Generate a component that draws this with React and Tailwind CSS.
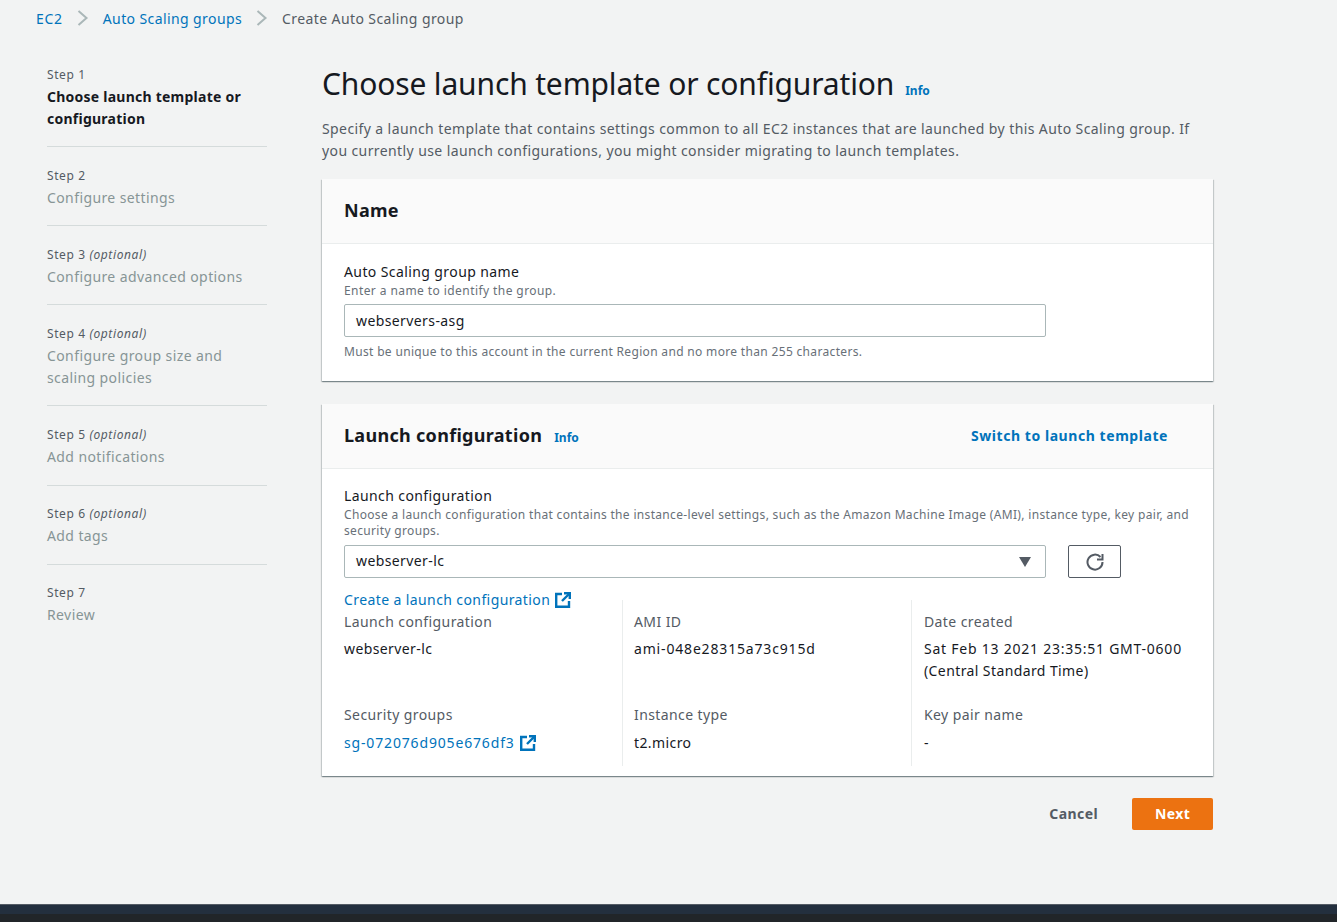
const steps = [
    { step: 'Step 1', title: ['Choose launch template or', 'configuration'], active: true, pad: 'pt-[20px] pb-[16px]' },
    { step: 'Step 2', title: ['Configure settings'], pad: 'pt-[20px] pb-[16px]' },
    { step: 'Step 3', optional: true, title: ['Configure advanced options'], pad: 'pt-[20px] pb-[16px]' },
    { step: 'Step 4', optional: true, title: ['Configure group size and', 'scaling policies'], pad: 'pt-[20px] pb-[16px]' },
    { step: 'Step 5', optional: true, title: ['Add notifications'], pad: 'pt-[20px] pb-[17px]' },
    { step: 'Step 6', optional: true, title: ['Add tags'], pad: 'pt-[19px] pb-[17px]' },
    { step: 'Step 7', title: ['Review'], pad: 'pt-[19px] pb-[16px]' },
];

function Chevron() {
    return (
        <svg width="12" height="16" viewBox="0 0 12 16" fill="none" stroke="#aab7b8" strokeWidth="2" className="shrink-0">
            <path d="M1.5 1l8 7-8 7" />
        </svg>
    );
}

function ExternalIcon() {
    return (
        <svg width="16" height="16" viewBox="0 0 16 16" fill="none" stroke="#0073bb" strokeWidth="2.4" className="shrink-0">
            <path d="M7 2H1.2v12.8H14V9" />
            <path d="M9 1.2h5.8V7" />
            <path d="M14.5 1.5L7 9" />
        </svg>
    );
}

function Detail({ label, value, children, className = '', gap = 'mt-[5px]' }) {
    return (
        <div className={className}>
            <div className="text-[#545b64] leading-[22px]">{label}</div>
            <div className={`${gap} leading-[22px] text-[#16191f]`}>{children || value}</div>
        </div>
    );
}

export default function App() {
    return (
        <div className="min-h-[922px] bg-[#f2f3f3] flex flex-col text-[14px] tracking-[0.4px] text-[#16191f] font-['Noto_Sans',sans-serif]">
            <div className="flex items-center h-[36px] pl-[36px] text-[#0073bb]">
                <span className="tracking-[0.7px]">EC2</span>
                <span className="ml-[14px] mr-[14px]"><Chevron /></span>
                <span>Auto Scaling groups</span>
                <span className="ml-[14px] mr-[14px]"><Chevron /></span>
                <span className="text-[#545b64]">Create Auto Scaling group</span>
            </div>

            <div className="flex flex-1 pl-[47px]">
                <div className="w-[220px] shrink-0 pt-[10px]">
                    {steps.map((s, i) => (
                        <div key={s.step} className={`${s.pad} ${i < steps.length - 1 ? 'border-b border-[#d5dbdb]' : ''}`}>
                            <div className="text-[12px] tracking-[0.6px] leading-[18px] text-[#545b64]">
                                {s.step}{s.optional && <i> (optional)</i>}
                            </div>
                            <div className={`mt-[2px] leading-[22px] ${s.active ? 'font-bold tracking-[0.24px] text-[#16191f]' : 'text-[#879596]'}`}>
                                {s.title.map(t => <div key={t}>{t}</div>)}
                            </div>
                        </div>
                    ))}
                </div>

                <div className="ml-[55px] w-[891px] shrink-0">
                    <div className="flex items-baseline mt-[26px]">
                        <h1 className="text-[30px] tracking-[-0.15px] leading-[44px] font-normal text-[#16191f]">Choose launch template or configuration</h1>
                        <span className="ml-[11px] text-[12px] tracking-normal font-bold text-[#0073bb]">Info</span>
                    </div>
                    <p className="mt-[12px] leading-[22px] text-[#545b64]">
                        Specify a launch template that contains settings common to all EC2 instances that are launched by this Auto Scaling group. If you currently use launch configurations, you might consider migrating to launch templates.
                    </p>

                    <div className="mt-[17px] bg-white shadow-[0_1px_1px_0_rgba(0,28,36,0.3),1px_1px_1px_0_rgba(0,28,36,0.15),-1px_1px_1px_0_rgba(0,28,36,0.15)]">
                        <div className="h-[65px] flex items-center px-[22px] pb-[2px] bg-[#fafafa] border-b border-[#eaeded]">
                            <h2 className="text-[18px] tracking-[0.3px] font-bold leading-[22px]">Name</h2>
                        </div>
                        <div className="px-[22px] pt-[18px] pb-[20px]">
                            <div className="leading-[20px]">Auto Scaling group name</div>
                            <div className="text-[12px] tracking-[0.42px] leading-[18px] text-[#687078]">Enter a name to identify the group.</div>
                            <div className="mt-[4px] w-[702px] h-[33px] flex items-center px-[11px] bg-white border border-[#aab7b8] rounded-[2px]">webservers-asg</div>
                            <div className="mt-[6px] text-[12px] tracking-[0.33px] leading-[18px] text-[#687078]">Must be unique to this account in the current Region and no more than 255 characters.</div>
                        </div>
                    </div>

                    <div className="mt-[23px] bg-white shadow-[0_1px_1px_0_rgba(0,28,36,0.3),1px_1px_1px_0_rgba(0,28,36,0.15),-1px_1px_1px_0_rgba(0,28,36,0.15)]">
                        <div className="h-[65px] flex items-center px-[22px] pb-[2px] bg-[#fafafa] border-b border-[#eaeded]">
                            <div className="flex items-baseline">
                                <h2 className="text-[18px] tracking-[0.3px] font-bold leading-[22px]">Launch configuration</h2>
                                <span className="ml-[12px] text-[12px] tracking-normal font-bold text-[#0073bb]">Info</span>
                            </div>
                            <span className="ml-auto mr-[23px] font-bold tracking-[0.56px] text-[#0073bb]">Switch to launch template</span>
                        </div>
                        <div className="px-[22px] pt-[17px] pb-[10px]">
                            <div className="leading-[20px]">Launch configuration</div>
                            <div className="text-[12px] tracking-[0.33px] leading-[16px] text-[#687078] mt-[1px]">
                                Choose a launch configuration that contains the instance-level settings, such as the Amazon Machine Image (AMI), instance type, key pair, and security groups.
                            </div>
                            <div className="mt-[6px] flex items-center">
                                <div className="w-[702px] h-[33px] flex items-center justify-between pl-[11px] pr-[14px] bg-white border border-[#aab7b8] rounded-[2px]">
                                    <span className="-mt-[2px]">webserver-lc</span>
                                    <svg width="12" height="10" viewBox="0 0 12 10"><path d="M0 0h12L6 10z" fill="#545b64" /></svg>
                                </div>
                                <div className="ml-[22px] w-[53px] h-[33px] flex items-center justify-center border border-[#545b64] rounded-[2px]">
                                    <svg width="18" height="18" viewBox="0 0 18 18" fill="none" stroke="#545b64" strokeWidth="2">
                                        <path d="M14.5 4A7.5 7.5 0 1 0 16.5 9" />
                                        <path d="M16.5 1v5.5H11" />
                                    </svg>
                                </div>
                            </div>

                            <div className="mt-[11px] flex items-center leading-[22px] text-[#0073bb]">
                                Create a launch configuration<span className="ml-[5px]"><ExternalIcon /></span>
                            </div>
                            <div className="grid grid-cols-[278px_289px_280px] -mt-[11px]">
                                <div className="pr-[12px] pt-[11px] pb-[12px]">
                                    <Detail label="Launch configuration" value="webserver-lc" />
                                    <Detail className="mt-[44px]" gap="mt-[6px]" label="Security groups">
                                        <span className="inline-flex items-center text-[#0073bb] tracking-[0.84px]">sg-072076d905e676df3<span className="ml-[5px]"><ExternalIcon /></span></span>
                                    </Detail>
                                </div>
                                <div className="border-l border-[#eaeded] pl-[11px] pr-[12px] pt-[11px] pb-[12px]">
                                    <Detail label="AMI ID"><span className="tracking-[0.83px]">ami-048e28315a73c915d</span></Detail>
                                    <Detail className="mt-[44px]" gap="mt-[6px]" label="Instance type" value="t2.micro" />
                                </div>
                                <div className="border-l border-[#eaeded] pl-[12px] pt-[11px] pb-[12px]">
                                    <Detail label="Date created">
                                        <span className="tracking-[0.76px]">Sat Feb 13 2021 23:35:51 GMT-0600</span> (Central Standard Time)
                                    </Detail>
                                    <Detail className="mt-[22px]" gap="mt-[6px]" label="Key pair name" value="-" />
                                </div>
                            </div>
                        </div>
                    </div>

                    <div className="flex items-center justify-end mt-[22px]">
                        <span className="-mt-[2px] font-bold text-[#545b64]">Cancel</span>
                        <div className="ml-[34px] w-[81px] h-[32px] pb-[2px] flex items-center justify-center rounded-[2px] bg-[#ec7211] font-bold text-white">Next</div>
                    </div>
                </div>
            </div>

            <div className="h-[18px] border-t border-[#545b64] bg-[linear-gradient(#232f3e_0,#232f3e_9px,#212529_9px)]" />
        </div>
    );
}
